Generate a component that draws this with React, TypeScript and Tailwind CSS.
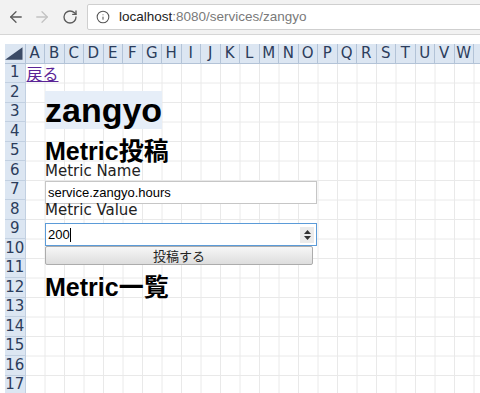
import { ArrowLeft, ArrowRight, RotateCw, Info } from "lucide-react";

const cols = "ABCDEFGHIJKLMNOPQRSTUVW".split("");
const rows = Array.from({ length: 17 }, (_, i) => i + 1);

const Toolbar = () => {
  return (
    <div className="h-[35px] bg-[#f2f2f2] border-b border-[#d6d6d6] flex items-center">
      <ArrowLeft size={18} strokeWidth={1.7} className="ml-[7px] text-[#5a5a5a]" />
      <ArrowRight size={18} strokeWidth={1.7} className="ml-[8px] text-[#c2c2c2]" />
      <RotateCw size={16} strokeWidth={2} className="ml-[11px] text-[#5a5a5a]" />
      <div className="ml-[9px] -mr-[10px] flex-1 h-[26px] bg-white border border-[#cfcfcf] rounded-[2px] flex items-center">
        <Info size={14} strokeWidth={1.8} className="ml-[8px] text-[#555]" />
        <span className="ml-[9px] text-[13.5px] font-['Liberation_Sans',sans-serif] text-[#7a7a7a]">
          <span className="text-[#222]">localhost</span>:8080/services/zangyo
        </span>
      </div>
    </div>
  );
};

const RowHeads = () => {
  return (
    <div className="w-[20.5px] shrink-0 bg-[#dce6f2] text-[#2c3d5c]">
      <div className="h-[19.5px] border-b border-r border-[#b3c3d7] flex items-end justify-end pr-[2px] pb-[3px]">
        <svg width="18" height="13" viewBox="0 0 18 13">
          <polygon points="18,0 18,13 0,13" fill="#3c4b66" />
        </svg>
      </div>
      {rows.map((r) => (
        <div
          key={r}
          className="h-[19.5px] border-b border-r border-[#c2d0e1] flex items-center justify-center leading-none"
        >
          {r}
        </div>
      ))}
    </div>
  );
};

const ColHeads = () => {
  return (
    <div className="flex h-[19.5px] bg-[#dce6f2] text-[#2c3d5c] overflow-hidden">
      {cols.map((c) => (
        <div
          key={c}
          className="w-[19.5px] shrink-0 border-r border-b border-[#b3c3d7] flex items-center justify-center leading-none"
        >
          {c}
        </div>
      ))}
      <div className="w-[19.5px] shrink-0 border-r border-b border-[#b3c3d7]" />
    </div>
  );
};

const Sheet = () => {
  const heading = "font-['Liberation_Sans','Noto_Sans_CJK_JP',sans-serif] font-bold";
  return (
    <div className="h-[331.5px] leading-[19.5px] text-[#222] bg-[linear-gradient(to_left,#e9e9e9_1px,transparent_1px),linear-gradient(to_top,#e9e9e9_1px,transparent_1px)] bg-[size:19.5px_19.5px]">
      <div className="h-[19.5px] pl-[1px]">
        <a href="#" className="text-[16px] text-[#5b2496] underline font-['Noto_Sans_CJK_JP',sans-serif]">
          戻る
        </a>
      </div>

      <div className="ml-[19.5px] h-[58.5px] pt-[8px]">
        <h1 className={`${heading} text-[34px] leading-[39px] text-black`}>
          <span className="bg-[#e6eef8]">zangyo</span>
        </h1>
      </div>

      <div className="ml-[19.5px]">
        <h2 className={`${heading} h-[19.5px] text-[25px] leading-[18px] text-black`}>Metric投稿</h2>
        <div className="h-[19.5px] pt-[1px]">Metric Name</div>
        <div className="h-[19.5px]">
          <input
            readOnly
            value="service.zangyo.hours"
            className="mt-[0.5px] h-[23px] w-[272px] bg-white border border-[#c6c6c6] px-[2px] text-[13px] font-['Liberation_Sans',sans-serif] text-black outline-none"
          />
        </div>
        <div className="h-[19.5px] pt-[1px]">Metric Value</div>
        <div className="h-[58.5px] pt-[3.5px]">
          <div className="h-[23px] w-[272px] bg-white border border-[#5b9bd8] flex items-center pl-[2px] pr-[2px] text-[13px] font-['Liberation_Sans',sans-serif] text-black">
            <span>200</span>
            <span className="w-px h-[14px] bg-black" />
            <div className="ml-auto w-[14px] h-[16px] bg-[#ebebeb] flex flex-col items-center justify-center gap-[2px]">
              <svg width="7" height="4" viewBox="0 0 7 4">
                <polygon points="3.5,0 7,4 0,4" fill="#333" />
              </svg>
              <svg width="7" height="4" viewBox="0 0 7 4">
                <polygon points="0,0 7,0 3.5,4" fill="#333" />
              </svg>
            </div>
          </div>
          <button className="block h-[19px] w-[268px] border border-[#acacac] rounded-[2px] bg-[linear-gradient(#f7f7f7,#dddddd)] text-[13px] leading-[17px] text-[#222] font-['Noto_Sans_CJK_JP',sans-serif]">
            投稿する
          </button>
        </div>
        <h2 className={`${heading} h-[19.5px] text-[25px] leading-[18px] text-black`}>Metric一覧</h2>
      </div>
    </div>
  );
};

const App = () => {
  return (
    <div className="w-[480px] h-[393px] overflow-hidden bg-white">
      <Toolbar />
      <div className="flex pt-[9px] pl-[5px] text-[15px] font-['DejaVu_Sans',sans-serif]">
        <RowHeads />
        <div className="flex-1 min-w-0">
          <ColHeads />
          <Sheet />
        </div>
      </div>
    </div>
  );
};

export default App;
